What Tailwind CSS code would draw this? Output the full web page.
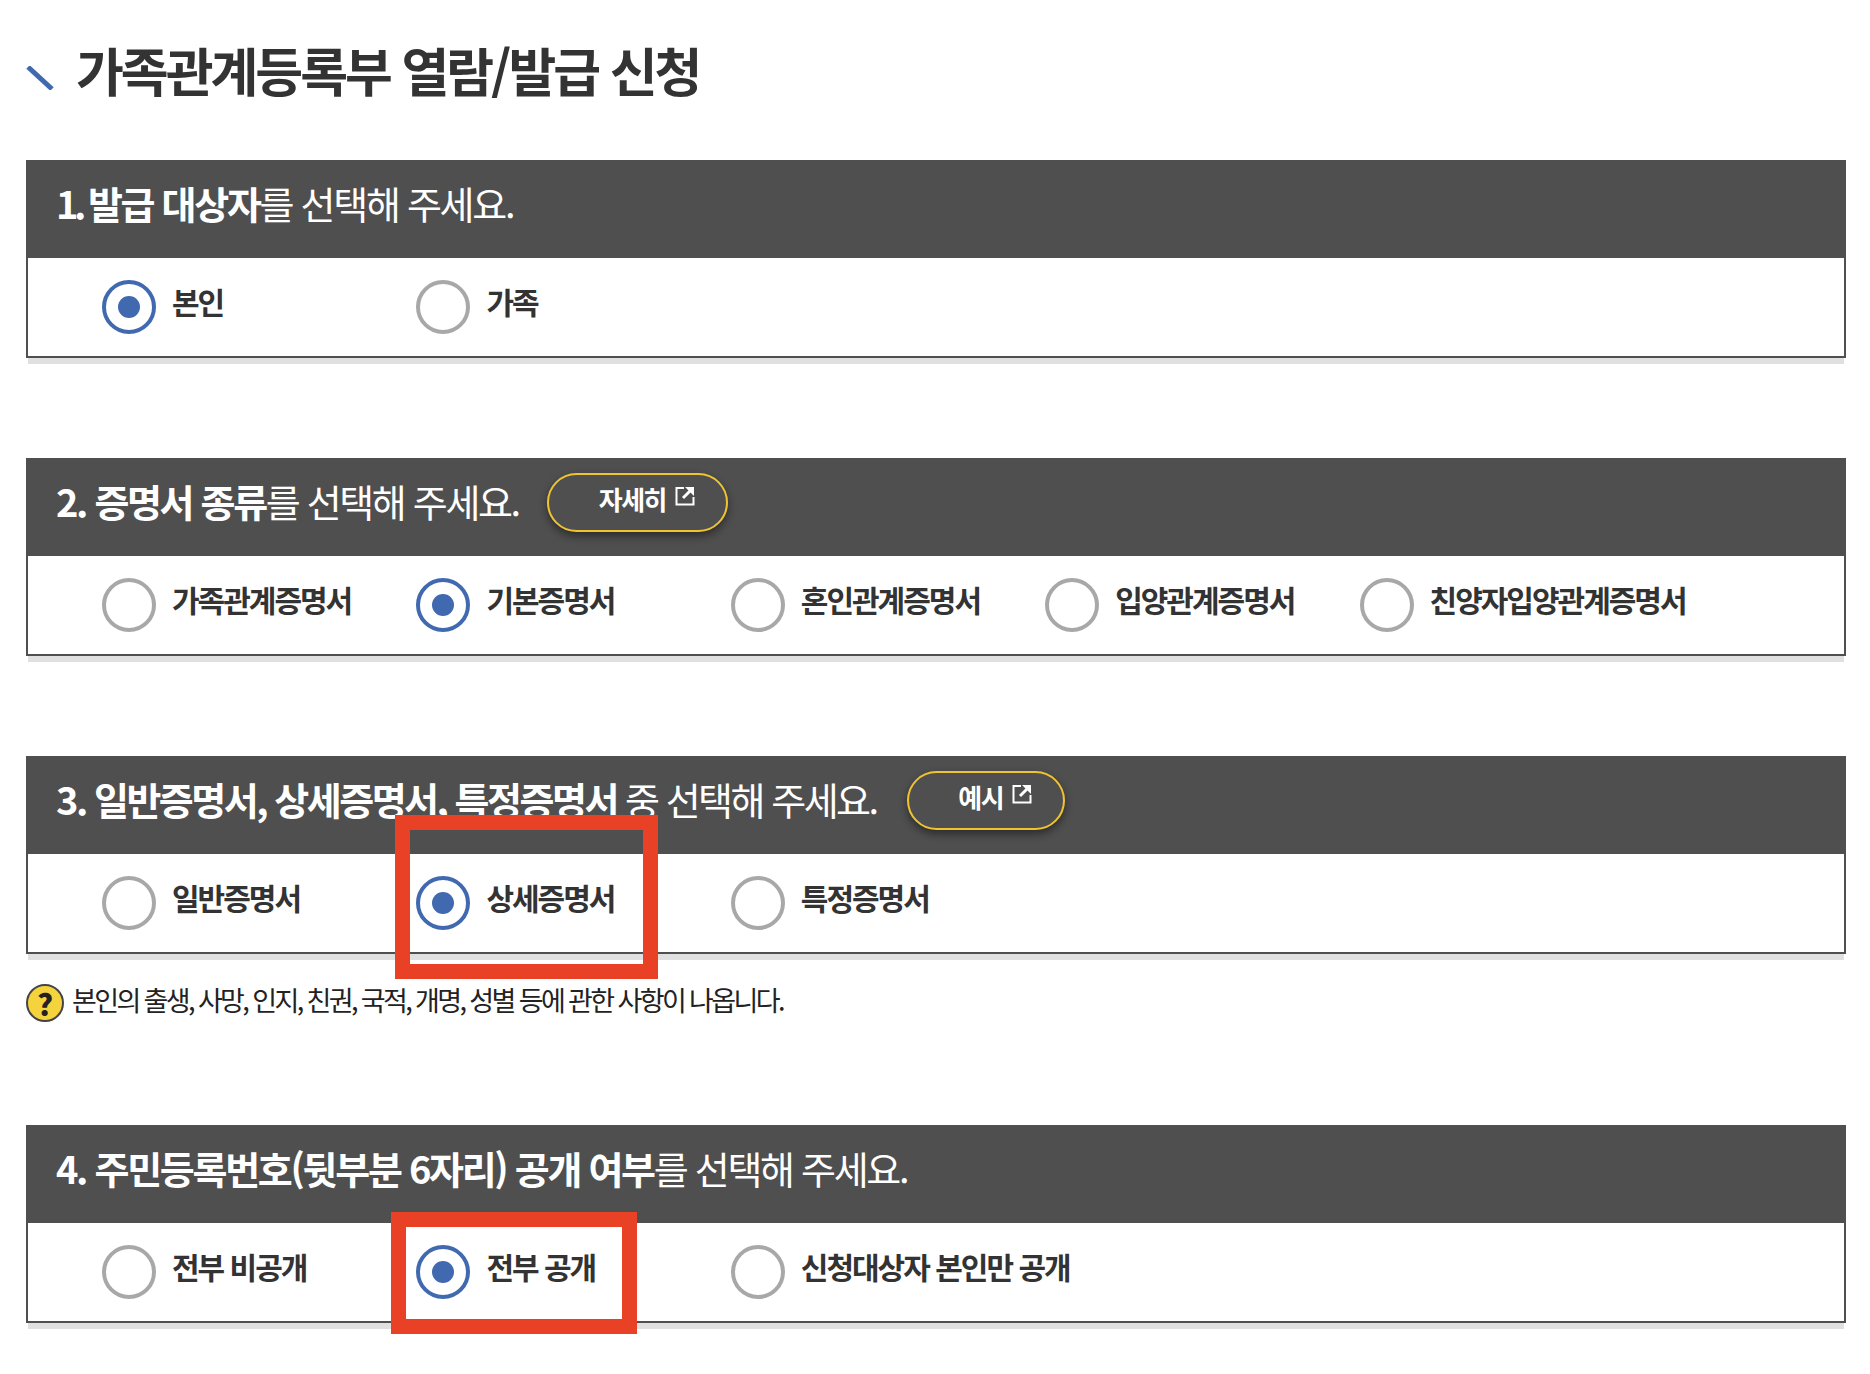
<!DOCTYPE html>
<html lang="ko">
<head>
  <meta charset="UTF-8" />
  <title>가족관계등록부 열람/발급 신청</title>
  <script src="https://cdn.jsdelivr.net/npm/@tailwindcss/browser@4"></script>
</head>
<body class="bg-white min-h-screen font-['Noto_Sans_CJK_KR',sans-serif] text-[#333]">
  <div class="relative w-[1870px] h-[1374px] pl-[26px] pr-[24px] overflow-hidden">

    <!-- Page title -->
    <div class="h-[160px] pt-[34px] flex items-start gap-[22px]">
      <svg class="w-[28px] h-[24px] mt-[32px] shrink-0" viewBox="0 0 28 24"><path d="M2 1 L26 23" stroke="#4169b0" stroke-width="5" /></svg>
      <h1 class="text-[52px] leading-[72px] font-bold tracking-[-3px]">가족관계등록부 열람/발급 신청</h1>
    </div>

    <!-- 1 -->
    <section class="h-[198px] mb-[100px] border-x-2 border-b-2 border-[#4f4f4f] shadow-[0_8px_0_-2px_#e0e0e0]">
      <div class="h-[98px] -mx-[2px] bg-[#4f4f4f] pl-[30px] pb-[14px] flex items-center text-white text-[38px] tracking-[-2.3px]">
        <h2><b><span class="tracking-[-4.5px]">1. </span>발급 대상자</b>를 선택해 주세요.</h2>
      </div>
      <div class="h-[98px] pl-[74px] flex items-center">
        <label class="w-[314.4px] flex items-center gap-[16px]">
          <span class="w-[54px] h-[54px] shrink-0 rounded-full border-4 border-[#4169b0] flex items-center justify-center"><span class="w-[22px] h-[22px] rounded-full bg-[#4169b0]"></span></span>
          <span class="text-[30px] font-bold tracking-[-2px] -mt-[11px] whitespace-nowrap">본인</span>
        </label>
        <label class="w-[314.4px] flex items-center gap-[16px]">
          <span class="w-[54px] h-[54px] shrink-0 rounded-full border-4 border-[#a8a8a8]"></span>
          <span class="text-[30px] font-bold tracking-[-2px] -mt-[11px] whitespace-nowrap">가족</span>
        </label>
      </div>
    </section>

    <!-- 2 -->
    <section class="h-[198px] mb-[100px] border-x-2 border-b-2 border-[#4f4f4f] shadow-[0_8px_0_-2px_#e0e0e0]">
      <div class="h-[98px] -mx-[2px] bg-[#4f4f4f] pl-[30px] pb-[14px] flex items-center gap-[28px] text-white text-[38px] tracking-[-2.35px]">
        <h2><b>2. 증명서 종류</b>를 선택해 주세요.</h2>
        <a class="w-[181px] h-[59px] mt-[4px] pb-[8px] rounded-full border-2 border-[#f0c330] shadow-[0_4px_8px_rgba(0,0,0,0.45)] flex items-center justify-center gap-[9px] pl-[19px] text-[26px] font-bold tracking-[-1.5px]">
          자세히
          <svg class="w-[20px] h-[20px] -mt-[4px]" viewBox="0 0 20 20" fill="none" stroke="#fff"><path stroke-width="2" d="M9 2 H1.5 V18.5 H18.5 V11" /><path stroke-width="3" d="M8 12 L16 4" /><path fill="#fff" stroke="none" d="M10 1 H19 V10 Z" /></svg>
        </a>
      </div>
      <div class="h-[98px] pl-[74px] flex items-center">
        <label class="w-[314.4px] flex items-center gap-[16px]">
          <span class="w-[54px] h-[54px] shrink-0 rounded-full border-4 border-[#a8a8a8]"></span>
          <span class="text-[30px] font-bold tracking-[-2px] -mt-[11px] whitespace-nowrap">가족관계증명서</span>
        </label>
        <label class="w-[314.4px] flex items-center gap-[16px]">
          <span class="w-[54px] h-[54px] shrink-0 rounded-full border-4 border-[#4169b0] flex items-center justify-center"><span class="w-[22px] h-[22px] rounded-full bg-[#4169b0]"></span></span>
          <span class="text-[30px] font-bold tracking-[-2px] -mt-[11px] whitespace-nowrap">기본증명서</span>
        </label>
        <label class="w-[314.4px] flex items-center gap-[16px]">
          <span class="w-[54px] h-[54px] shrink-0 rounded-full border-4 border-[#a8a8a8]"></span>
          <span class="text-[30px] font-bold tracking-[-2px] -mt-[11px] whitespace-nowrap">혼인관계증명서</span>
        </label>
        <label class="w-[314.4px] flex items-center gap-[16px]">
          <span class="w-[54px] h-[54px] shrink-0 rounded-full border-4 border-[#a8a8a8]"></span>
          <span class="text-[30px] font-bold tracking-[-2px] -mt-[11px] whitespace-nowrap">입양관계증명서</span>
        </label>
        <label class="flex items-center gap-[16px]">
          <span class="w-[54px] h-[54px] shrink-0 rounded-full border-4 border-[#a8a8a8]"></span>
          <span class="text-[30px] font-bold tracking-[-2px] -mt-[11px] whitespace-nowrap">친양자입양관계증명서</span>
        </label>
      </div>
    </section>

    <!-- 3 -->
    <section class="h-[198px] border-x-2 border-b-2 border-[#4f4f4f] shadow-[0_8px_0_-2px_#e0e0e0]">
      <div class="h-[98px] -mx-[2px] bg-[#4f4f4f] pl-[30px] pb-[14px] flex items-center gap-[30px] text-white text-[38px] tracking-[-2.5px]">
        <h2><b>3. 일반증명서, 상세증명서, 특정증명서</b> 중 선택해 주세요.</h2>
        <a class="w-[158px] h-[59px] mt-[4px] pb-[8px] rounded-full border-2 border-[#f0c330] shadow-[0_4px_8px_rgba(0,0,0,0.45)] flex items-center justify-center gap-[9px] pl-[19px] text-[26px] font-bold tracking-[-1.5px]">
          예시
          <svg class="w-[20px] h-[20px] -mt-[4px]" viewBox="0 0 20 20" fill="none" stroke="#fff"><path stroke-width="2" d="M9 2 H1.5 V18.5 H18.5 V11" /><path stroke-width="3" d="M8 12 L16 4" /><path fill="#fff" stroke="none" d="M10 1 H19 V10 Z" /></svg>
        </a>
      </div>
      <div class="h-[98px] pl-[74px] flex items-center">
        <label class="w-[314.4px] flex items-center gap-[16px]">
          <span class="w-[54px] h-[54px] shrink-0 rounded-full border-4 border-[#a8a8a8]"></span>
          <span class="text-[30px] font-bold tracking-[-2px] -mt-[11px] whitespace-nowrap">일반증명서</span>
        </label>
        <label class="w-[314.4px] flex items-center gap-[16px]">
          <span class="w-[54px] h-[54px] shrink-0 rounded-full border-4 border-[#4169b0] flex items-center justify-center"><span class="w-[22px] h-[22px] rounded-full bg-[#4169b0]"></span></span>
          <span class="text-[30px] font-bold tracking-[-2px] -mt-[11px] whitespace-nowrap">상세증명서</span>
        </label>
        <label class="w-[314.4px] flex items-center gap-[16px]">
          <span class="w-[54px] h-[54px] shrink-0 rounded-full border-4 border-[#a8a8a8]"></span>
          <span class="text-[30px] font-bold tracking-[-2px] -mt-[11px] whitespace-nowrap">특정증명서</span>
        </label>
      </div>
    </section>

    <!-- note -->
    <div class="h-[171px] pt-[30px] flex items-start gap-[8px]">
      <span class="w-[38px] h-[38px] rounded-full bg-[#f5d33c] border-2 border-[#444] flex items-center justify-center text-[30px] leading-none font-black text-[#222] shrink-0">?</span>
      <p class="text-[27px] leading-[36px] -mt-[2px] tracking-[-2.62px] text-[#222]">본인의 출생, 사망, 인지, 친권, 국적, 개명, 성별 등에 관한 사항이 나옵니다.</p>
    </div>

    <!-- 4 -->
    <section class="h-[198px] border-x-2 border-b-2 border-[#4f4f4f] shadow-[0_8px_0_-2px_#e0e0e0]">
      <div class="h-[98px] -mx-[2px] bg-[#4f4f4f] pl-[30px] pb-[14px] flex items-center text-white text-[38px] tracking-[-2.3px]">
        <h2><b>4. 주민등록번호(뒷부분 6자리) 공개 여부</b>를 선택해 주세요.</h2>
      </div>
      <div class="h-[98px] pl-[74px] flex items-center">
        <label class="w-[314.4px] flex items-center gap-[16px]">
          <span class="w-[54px] h-[54px] shrink-0 rounded-full border-4 border-[#a8a8a8]"></span>
          <span class="text-[30px] font-bold tracking-[-2px] -mt-[11px] whitespace-nowrap">전부 비공개</span>
        </label>
        <label class="w-[314.4px] flex items-center gap-[16px]">
          <span class="w-[54px] h-[54px] shrink-0 rounded-full border-4 border-[#4169b0] flex items-center justify-center"><span class="w-[22px] h-[22px] rounded-full bg-[#4169b0]"></span></span>
          <span class="text-[30px] font-bold tracking-[-2px] -mt-[11px] whitespace-nowrap">전부 공개</span>
        </label>
        <label class="w-[314.4px] flex items-center gap-[16px]">
          <span class="w-[54px] h-[54px] shrink-0 rounded-full border-4 border-[#a8a8a8]"></span>
          <span class="text-[30px] font-bold tracking-[-2px] -mt-[11px] whitespace-nowrap">신청대상자 본인만 공개</span>
        </label>
      </div>
    </section>

    <!-- red highlight boxes drawn over the form -->
    <div class="absolute left-[395px] top-[815px] w-[263px] h-[164px] border-[15px] border-[#e94125]"></div>
    <div class="absolute left-[391px] top-[1212px] w-[246px] h-[122px] border-[15px] border-[#e94125]"></div>
  </div>
</body>
</html>
